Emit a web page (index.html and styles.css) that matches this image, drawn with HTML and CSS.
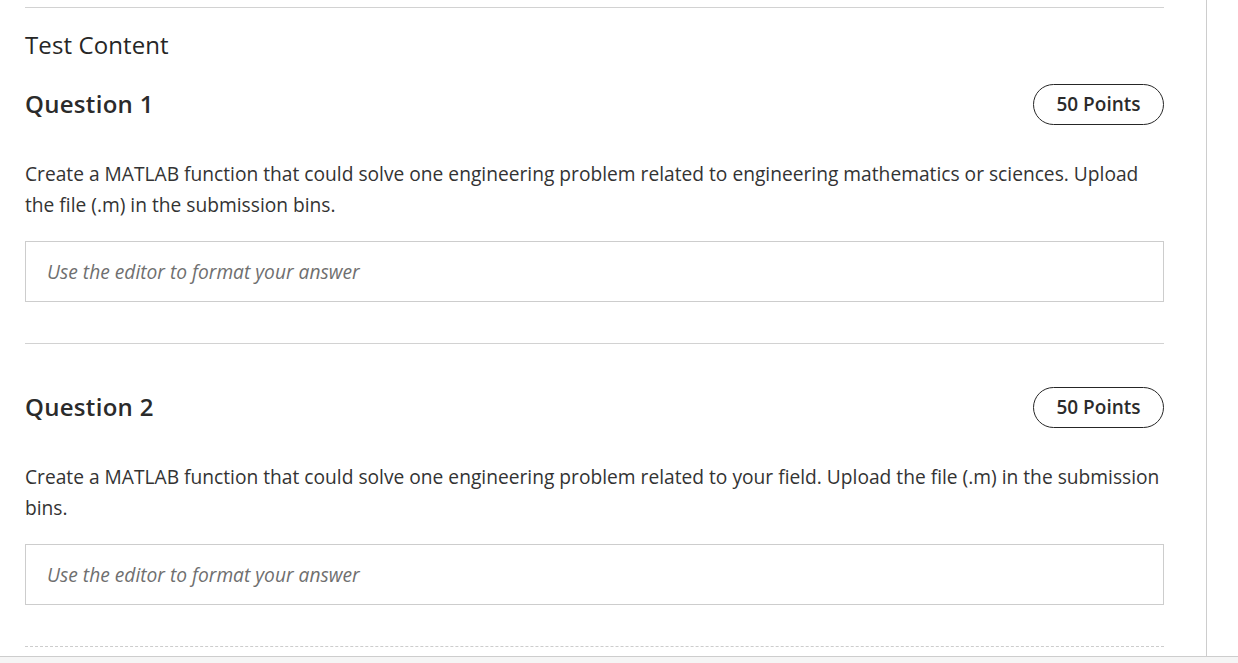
FILE: index.html
```html
<!DOCTYPE html>
<html lang="en">
<head>
<meta charset="utf-8">
<title>Test Content</title>
<link rel="stylesheet" href="styles.css">
</head>
<body>
<div class="page">
  <main class="main">
    <div class="content">
      <div class="top-rule"></div>
      <h1 class="section-title">Test Content</h1>

      <section class="question">
        <div class="q-head">
          <h2 class="q-title">Question 1</h2>
          <span class="points">50 Points</span>
        </div>
        <p class="q-text">Create a MATLAB function that could solve one engineering problem related to engineering mathematics or sciences. Upload the file (.m) in the submission bins.</p>
        <div class="answer">Use the editor to format your answer</div>
      </section>

      <div class="sep"></div>

      <section class="question">
        <div class="q-head">
          <h2 class="q-title">Question 2</h2>
          <span class="points">50 Points</span>
        </div>
        <p class="q-text">Create a MATLAB function that could solve one engineering problem related to your field. Upload the file (.m) in the submission bins.</p>
        <div class="answer">Use the editor to format your answer</div>
      </section>

      <div class="sep dashed"></div>
    </div>
  </main>
  <div class="side"></div>
</div>
<div class="bottom-strip"></div>
</body>
</html>
```

FILE: styles.css
```css
* { box-sizing: border-box; }
html, body { margin: 0; padding: 0; background: #fff; }
body {
  font-family: "Open Sans", "Noto Sans", sans-serif;
  color: #262626;
  height: 663px;
  overflow: hidden;
}
.page {
  display: flex;
  height: 656px;
}
.main {
  width: 1207px;
  border-right: 1px solid #cdcdcd;
  overflow: hidden;
}
.content {
  width: 1164px;
  padding-left: 25px;
  padding-top: 7px;
}
.top-rule {
  border-top: 1px solid #d2d2d2;
}
.section-title {
  margin: 22px 0 0;
  font-size: 24px;
  line-height: 30px;
  font-weight: 400;
  letter-spacing: 0.1px;
  color: #262626;
}
.q-head {
  display: flex;
  align-items: center;
  justify-content: space-between;
  height: 40px;
}
.section-title + .question .q-head { margin-top: 24px; }
.q-title {
  margin: 0;
  font-size: 24px;
  font-weight: 600;
  line-height: 32px;
  letter-spacing: 0.3px;
  color: #2b2b2b;
}
.points {
  display: inline-flex;
  align-items: center;
  justify-content: center;
  width: 131px;
  height: 41px;
  border: 1px solid #262626;
  border-radius: 21px;
  font-size: 19px;
  font-weight: 600;
  color: #2b2b2b;
}
.q-text {
  margin: 34px 0 0;
  font-size: 19.2px;
  line-height: 31px;
  color: #333;
}
.answer {
  margin-top: 21px;
  height: 61px;
  border: 1px solid #cdcdcd;
  padding-left: 21px;
  display: flex;
  align-items: center;
  font-size: 19.2px;
  font-style: italic;
  color: #6f6f6f;
}
.sep {
  margin-top: 41px;
  border-top: 1px solid #d2d2d2;
}
.sep + .question .q-head { margin-top: 43px; }
.sep.dashed {
  border-top: 1px dashed #cdcdcd;
}
.side {
  flex: 1;
}
.bottom-strip {
  height: 7px;
  border-top: 1px solid #cdcdcd;
  background: #f5f5f5;
}
```
